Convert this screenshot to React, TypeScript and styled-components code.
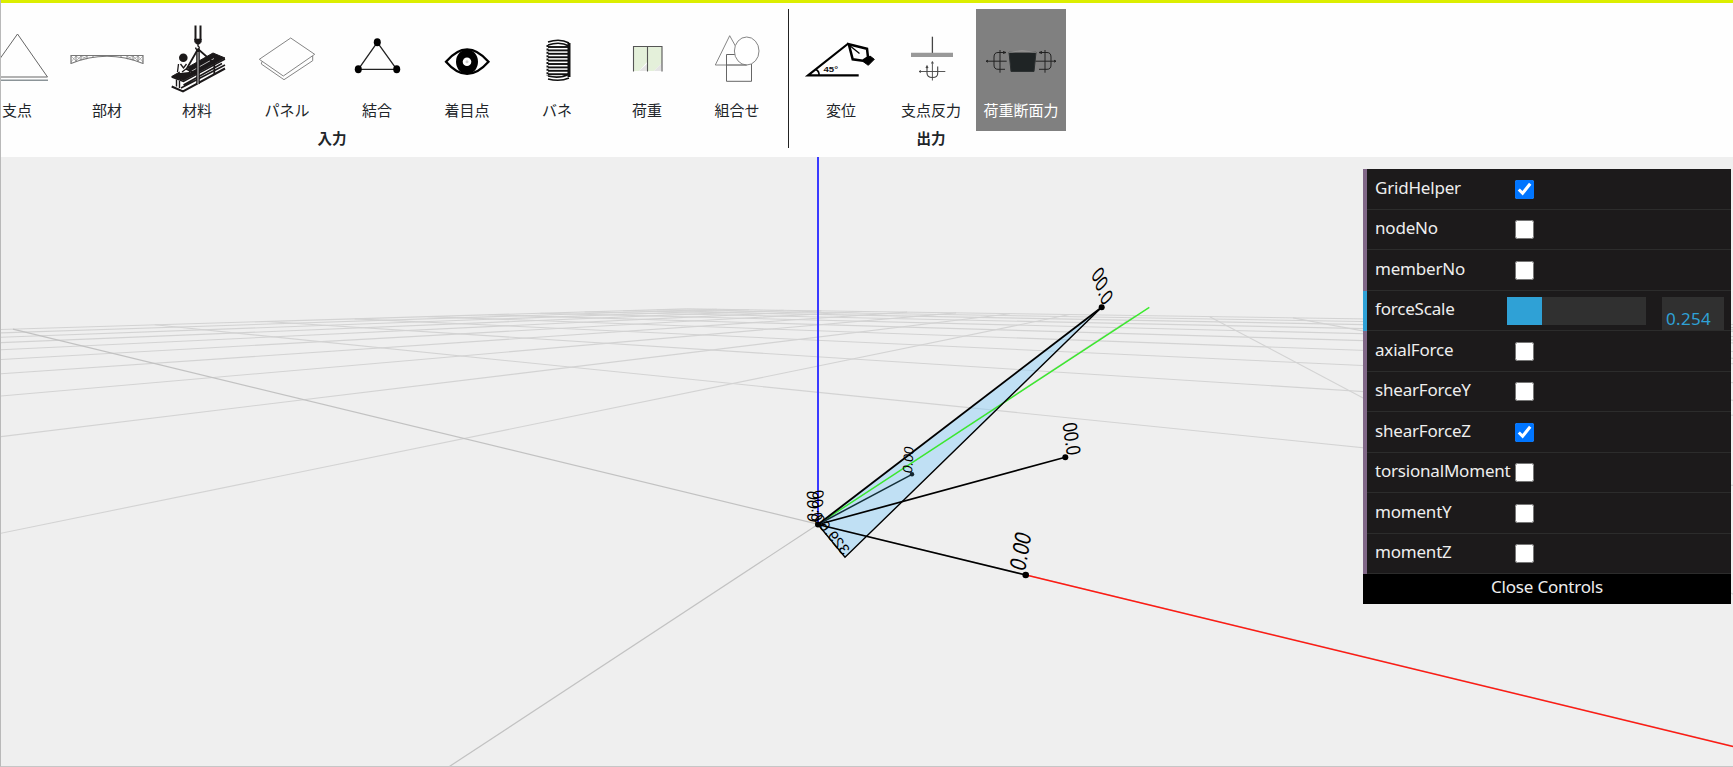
import React from "react";
import styled, { createGlobalStyle } from "styled-components";

const GlobalStyle = createGlobalStyle`
  * { box-sizing: border-box; }
  body { margin: 0; background: #efefef; overflow: hidden; }
`;

const Page = styled.div`
  display: flex;
  flex-direction: column;
  width: 1733px;
  height: 767px;
  overflow: hidden;
  border-left: 1px solid #b9b9b9;
  border-bottom: 1px solid #c6c6c6;
  font-family: "Noto Sans CJK JP", sans-serif;
`;

const Toolbar = styled.header`
  flex: none;
  display: flex;
  height: 157px;
  padding-top: 6px;
  border-top: 3px solid #dcee00;
  background: #fefefe;
`;

const Group = styled.section<{ $pull?: number }>`
  flex: none;
  display: flex;
  flex-direction: column;
  margin-left: ${(p) => p.$pull ?? 0}px;
`;

const GroupItems = styled.div`
  display: flex;
`;

const GroupTitle = styled.div`
  font-size: 14.5px;
  font-weight: 700;
  line-height: 14px;
  text-align: center;
  color: #212529;
`;

const Divider = styled.div`
  flex: none;
  width: 1px;
  height: 139px;
  margin: 0 7px 0 6px;
  background: #222;
`;

const Tool = styled.div<{ $active?: boolean }>`
  display: flex;
  flex-direction: column;
  align-items: center;
  width: 90px;
  height: 122px;
  background: ${(p) => (p.$active ? "#808080" : "transparent")};
  color: ${(p) => (p.$active ? "#fff" : "#212529")};
`;

const ToolIcon = styled.svg`
  display: block;
  flex: none;
  width: 90px;
  height: 88px;
  fill: none;
`;

const ToolLabel = styled.span`
  font-size: 15px;
  font-weight: 400;
  line-height: 25px;
  white-space: nowrap;
`;

const Viewport = styled.main`
  position: relative;
  flex: 1;
  min-height: 0;
  background: #efefef;
`;

const Scene = styled.svg`
  display: block;
  width: 1732px;
  height: 609px;
`;

const Panel = styled.aside`
  position: absolute;
  top: 12px;
  right: 2px;
  width: 368px;
  font-family: "Noto Sans", sans-serif;
  font-size: 17px;
  letter-spacing: -0.2px;
  color: #eee;
`;

const Row = styled.div<{ $accent?: string }>`
  display: flex;
  align-items: center;
  height: 40.5px;
  padding-left: 8px;
  border-left: 4px solid ${(p) => p.$accent ?? "#806787"};
  background: linear-gradient(#2c2c2c, #2c2c2c) bottom / 100% 1px no-repeat, #1c1a1b;
`;

const RowName = styled.span`
  width: 140px;
  padding-bottom: 3px;
  line-height: 24px;
  white-space: nowrap;
`;

const Check = styled.input`
  width: 19px;
  height: 19px;
  margin: 0;
`;

const Slider = styled.div`
  width: 139px;
  height: 28px;
  margin-left: -8px;
  background: #303030;
`;

const SliderFill = styled.div`
  height: 100%;
  background: #2fa1d6;
`;

const NumberBox = styled.div`
  width: 62px;
  height: 33px;
  margin: 6px 0 0 16px;
  padding: 9px 0 0 4px;
  background: #303030;
  color: #2fa1d6;
  line-height: 26px;
  letter-spacing: 0.3px;
`;

const CloseButton = styled.div`
  height: 30px;
  background: #000;
  line-height: 25px;
  text-align: center;
`;

const icons: Record<string, React.ReactNode> = {
  support: (
    <g stroke="#666" strokeWidth="1">
      <path d="M15 68 45.5 25 75.5 68Z" />
      <path d="M15 71.3H76" stroke="#8b9498" strokeWidth="1.4" />
    </g>
  ),
  member: (
    <g stroke="#777" strokeWidth=".9">
      <path d="M9 46.5H81M9 54.5Q45 40 81 54.5M9 46V55M81 46V55" strokeWidth="1.2" />
      <path d="M14 46v7M19 46v5M25 46v4M31 46v2M59 46v2M65 46v4M71 46v5M76 46v7" />
      <path d="M9 53l5-6 5 4 6-4M81 53l-5-6-5 4-6-4M9 47l5 5 5-5 6 3M81 47l-5 5-5-5-6 3" strokeWidth=".5" />
    </g>
  ),
  material: (
    <g stroke="#1b1819">
      <path d="M43.5 16.5V31M48.5 16.5V31" strokeWidth="2" />
      <path d="M42.5 30h6.8v3l-1.700 2h-3.200l-1.700-2Z" fill="#1b1819" strokeWidth=".6" />
      <path d="M46 35v2q2.500 1.500 0 3.500q-2.500 0-2.300-2" strokeWidth="1.4" />
      <path d="M19.700 67.500 61 44 73 49 31.500 71.500Z" fill="#1b1819" strokeWidth="1" />
      <path d="M22 69v9L31 82 72 60V50L31.500 72Z" fill="#fefefe" stroke="none" />
      <path d="M24.500 70.500v7M27.500 72v7" strokeWidth="1.4" />
      <path d="M19.700 68 31.500 72.500 73 50M31.500 76 70 54.500M29 79 73 56" strokeWidth="1.500" />
      <path d="M19.700 77.500 31 82.500 73 59.500" strokeWidth="2" />
      <path d="M38 63 62 49.500" stroke="#ddd" strokeWidth=".8" />
      <circle cx="31.300" cy="48.700" r="4.300" fill="#1b1819" stroke="none" />
      <path d="M26 55q4-3 9 0l2 8-9 1Z" fill="#fefefe" stroke="none" />
      <path d="M26.500 55l-1 8M28.500 55l3 4 3-4M34 60l-4 3" strokeWidth="1.300" />
      <path d="M46 40 34.500 60 46 65.500M46 40 62.300 54.300V66" strokeWidth="1.800" />
      <path d="M46 40V75" strokeWidth="3.600" />
      <path d="M46 43V75" stroke="#bbb" strokeWidth="1.100" />
    </g>
  ),
  panel: (
    <g stroke="#777" strokeWidth=".9">
      <path d="M48.700 29 72.700 45.300 41.300 67 17.300 50.300Z" />
      <path d="M20 52.500 19.300 55 42 70.700 70.700 51.700V47" />
    </g>
  ),
  joint: (
    <g stroke="#222" strokeWidth="1.300">
      <path d="M45.300 33.300 64.700 60.300H26.300Z" />
      <g fill="#000" stroke="none">
        <ellipse cx="45.300" cy="33.300" rx="3.500" ry="4" />
        <ellipse cx="64.700" cy="60.300" rx="3.500" ry="4" />
        <ellipse cx="26.300" cy="60.300" rx="3.500" ry="4" />
      </g>
    </g>
  ),
  eye: (
    <g>
      <path d="M24 52.700Q45 28 66.500 52.700Q45 77 24 52.700Z" stroke="#000" strokeWidth="2.300" />
      <ellipse cx="45" cy="52.700" rx="11" ry="12.300" fill="#000" />
      <circle cx="45" cy="52.700" r="4.300" fill="#fff" />
      <circle cx="45" cy="52.700" r="1.500" fill="#ccc" />
    </g>
  ),
  spring: (
    <g stroke="#111" strokeWidth="1.900">
      {Array.from({ length: 9 }, (_, i) => (
        <path key={i} d={`M36 ${38 + i * 3.4}H56.500`} />
      ))}
      <path d="M36 33Q48 29 57 34M36 36Q48 32 57 37M36 67Q48 70 57 65M36 70Q48 73 57 69" strokeWidth="1.600" />
      <path d="M35.500 36V67" strokeWidth="2" strokeDasharray="2 1.400" />
      <path d="M57 34V68" strokeWidth="3" />
    </g>
  ),
  load: (
    <g>
      <path d="M31.500 37.500H60L60 54 52 62H46V52L37 62H31.500Z" fill="#e4f0da" />
      <path d="M46 54 37 62H45ZM60 54 52 62H59Z" fill="#e4e4e4" />
      <path d="M31.500 62.500V37.500H60V62.500M45.500 37.500V62.500" stroke="#555" strokeWidth="1.100" />
    </g>
  ),
  combine: (
    <g stroke="#777" strokeWidth=".9">
      <path d="M37.700 26.700 23.300 56H54Z" />
      <path d="M34.500 45.500h25v26.800h-25Z" stroke="#555" />
      <ellipse cx="54.700" cy="42" rx="12.300" ry="14" fill="#fff" />
      <path d="M34.500 56H55" />
    </g>
  ),
  displacement: (
    <g stroke="#000">
      <path d="M62.700 66.300H12L52.300 34.500" strokeWidth="2.200" />
      <path d="M20 60.500q3.500 2 3 6" strokeWidth="1.600" />
      <path d="M52.800 35.300 71 39.700 72 48.300 66.700 51.700 56.700 50.300Z" strokeWidth="2.500" />
      <path d="M53 36 63.500 44.500" strokeWidth="1.300" />
      <path d="M67 52.500 74 47 78.300 50.300 72.300 56.300Z" fill="#000" strokeWidth="1" />
      <text x="27.500" y="63" fill="#111" stroke="none" fontFamily="Liberation Sans, sans-serif" fontWeight="700" fontSize="8" textLength="14.500" lengthAdjust="spacingAndGlyphs">45°</text>
    </g>
  ),
  reaction: (
    <g stroke="#444" strokeWidth=".9">
      <path d="M46.400 27.700V44" strokeWidth="1.300" />
      <path d="M25 45.900H67" stroke="#999" strokeWidth="4.300" />
      <path d="M33.300 62.500H59.300M46.400 53V71.500M35 61.500l-2 1 2 1M45.500 54.500l.9-2 1 2" />
      <path d="M41 57.500V64Q41 68.500 46.500 68.500T51.700 64V57.500M40 59l1-2 1 2" strokeWidth="1.100" />
    </g>
  ),
  section: (
    <g stroke="#222" strokeWidth="1">
      <path d="M33 43.300 60 43.300 58 62.500 35 62.500Z" fill="#1f2425" stroke="#2c3031" />
      <path d="M33 43.500 46 41.500 60 43.500" stroke="#999" fill="#8c8b8a" strokeWidth=".7" />
      <path d="M10.700 52.200H30.700M24 41V63.700M12 51.200l-2 1 2 1" />
      <path d="M30 43.500H22Q18 43.500 18 48V56Q18 60.300 22 60.300H29M27 42.500l3 1-3 1" />
      <path d="M59.500 52.200H79.500M69 41V63.700M78 51.200l2 1-2 1" />
      <path d="M63.300 43.500H71Q75 43.500 75 48V56Q75 60.300 71 60.300H63M66 42.500l-3 1 3 1" />
    </g>
  ),
};

const inputTools: [string, string][] = [
  ["", ""],
  ["support", "支点"],
  ["member", "部材"],
  ["material", "材料"],
  ["panel", "パネル"],
  ["joint", "結合"],
  ["eye", "着目点"],
  ["spring", "バネ"],
  ["load", "荷重"],
  ["combine", "組合せ"],
];

const outputTools: [string, string][] = [
  ["displacement", "変位"],
  ["reaction", "支点反力"],
  ["section", "荷重断面力"],
];

function ToolGroup({ title, tools, active, pull }: { title: string; tools: [string, string][]; active?: string; pull?: number }) {
  return (
    <Group $pull={pull}>
      <GroupItems>
        {tools.map(([icon, label]) => (
          <Tool key={label} $active={icon === active}>
            <ToolIcon viewBox="0 0 90 88">{icons[icon]}</ToolIcon>
            <ToolLabel>{label}</ToolLabel>
          </Tool>
        ))}
      </GroupItems>
      <GroupTitle>{title}</GroupTitle>
    </Group>
  );
}

// Perspective projection of the ground plane; u runs along -x, v along +y.
const depth = (u: number, v: number) => 1 + 0.606 * u + 0.989 * v;
const project = (u: number, v: number): [number, number] => {
  const w = depth(u, v);
  return [(818 - 72.7 * u + 1155 * v) / w, (524.3 + 179.9 * u + 291.2 * v) / w];
};

const HALF = 10;
const NEAR = 0.03;

function gridLine(k: number, alongV: boolean) {
  const start = alongV
    ? Math.max(-HALF, (NEAR - 1 - 0.606 * k) / 0.989)
    : Math.max(-HALF, (NEAR - 1 - 0.989 * k) / 0.606);
  if (start >= HALF) return null;
  const [x1, y1] = alongV ? project(k, start) : project(start, k);
  const [x2, y2] = alongV ? project(k, HALF) : project(HALF, k);
  return <line key={`${alongV}${k}`} x1={x1} y1={y1} x2={x2} y2={y2} stroke={k === 0 ? "#c2c2c2" : "#d3d3d3"} strokeWidth={k === 0 ? 1.2 : 1.1} />;
}

const steps = Array.from({ length: 2 * HALF + 1 }, (_, i) => i - HALF);

const values: { text: string; matrix: string; size: number }[] = [
  { text: "0.00", matrix: "0.17 -0.97 1.15 0.38 1025 572", size: 19.5 },
  { text: "0.00", matrix: "-0.13 -0.95 -1.15 0.18 1067 456", size: 17.5 },
  { text: "0.00", matrix: "-0.34 -0.92 -0.85 0.8 1103 307", size: 18 },
  { text: "0.00", matrix: "0.06 -1 1 0.25 912 474", size: 13.5 },
  { text: "0.00", matrix: "-0.02 -1 1.05 0.15 819 523", size: 16 },
  { text: "0.00", matrix: "0.06 -1 -1 0.15 811 522", size: 16 },
  { text: "329.60", matrix: "-0.63 -0.77 -0.72 0.62 843 556", size: 15.5 },
];

const nodes: [number, number, number][] = [
  [818, 524.5, 3],
  [1025.7, 575, 3.3],
  [1065.3, 457.3, 3],
  [1101.7, 307.3, 3],
  [912, 474.3, 2.2],
];

function ModelScene() {
  return (
    <Scene viewBox="1 157 1732 609">
      {steps.map((k) => gridLine(k, true))}
      {steps.map((k) => gridLine(k, false))}
      <path d="M818 524.500 1101.700 307.300 845 557.300Z" fill="#87cefa" fillOpacity=".45" />
      <line x1="818" y1="157" x2="818" y2="524" stroke="#3a3aff" strokeWidth="2" />
      <line x1="818" y1="524.300" x2="1149.300" y2="307.300" stroke="#3aea2c" strokeWidth="1.400" />
      <line x1="1026" y1="575" x2="1733" y2="746.500" stroke="#ff1a12" strokeWidth="1.400" />
      <g stroke="#000" strokeWidth="1.700">
        <path d="M818 524.500 1101.700 307.300" strokeWidth="1.900" />
        <path d="M1101.700 307.300 845 557.300 818 524.500" fill="none" strokeWidth="1.400" />
        <path d="M818 524.500 1065.300 457.300M818 524.500 1025.700 575" />
        <path d="M818 524.500 912 474.300" stroke="#14303a" strokeWidth="1.500" />
      </g>
      {nodes.map(([x, y, r]) => (
        <circle key={`${x}`} cx={x} cy={y} r={r} fill={r < 2.5 ? "#14262e" : "#000"} />
      ))}
      <g fontFamily="Liberation Sans, sans-serif" fill="#000">
        {values.map((v, i) => (
          <text key={i} transform={`matrix(${v.matrix})`} fontSize={v.size}>{v.text}</text>
        ))}
      </g>
    </Scene>
  );
}

const controls: { name: string; checked?: boolean; slider?: number }[] = [
  { name: "GridHelper", checked: true },
  { name: "nodeNo" },
  { name: "memberNo" },
  { name: "forceScale", slider: 0.254 },
  { name: "axialForce" },
  { name: "shearForceY" },
  { name: "shearForceZ", checked: true },
  { name: "torsionalMoment" },
  { name: "momentY" },
  { name: "momentZ" },
];

export default function App() {
  return (
    <Page>
      <GlobalStyle />
      <Toolbar>
        <ToolGroup title="入力" tools={inputTools} pull={-119} />
        <Divider />
        <ToolGroup title="出力" tools={outputTools} active="section" />
      </Toolbar>
      <Viewport>
        <ModelScene />
        <Panel>
          {controls.map((c) => (
            <Row key={c.name} $accent={c.slider !== undefined ? "#2fa1d6" : undefined}>
              <RowName>{c.name}</RowName>
              {c.slider !== undefined ? (
                <>
                  <Slider>
                    <SliderFill style={{ width: `${c.slider * 100}%` }} />
                  </Slider>
                  <NumberBox>{c.slider}</NumberBox>
                </>
              ) : (
                <Check type="checkbox" defaultChecked={c.checked} />
              )}
            </Row>
          ))}
          <CloseButton>Close Controls</CloseButton>
        </Panel>
      </Viewport>
    </Page>
  );
}
